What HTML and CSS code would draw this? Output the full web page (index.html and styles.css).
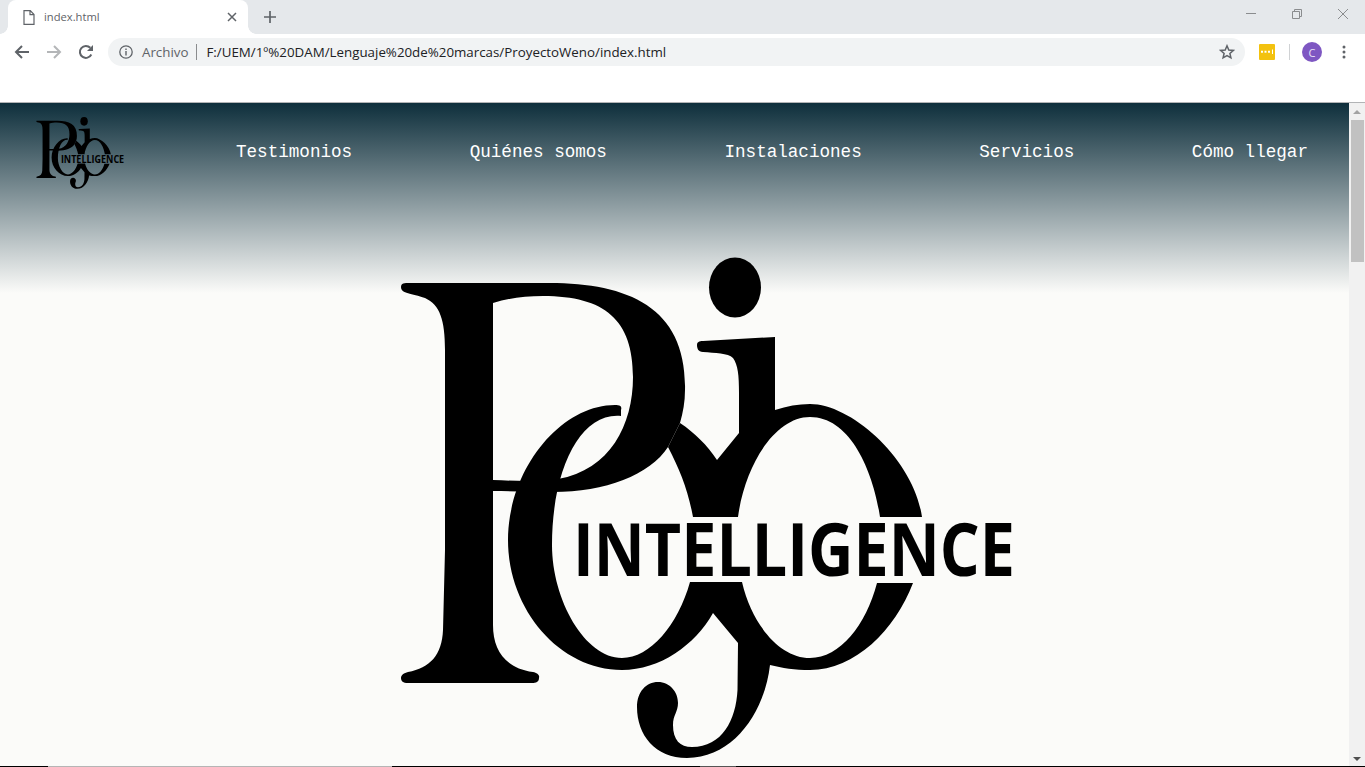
FILE: index.html
```html
<!DOCTYPE html>
<html lang="es">
<head>
<meta charset="utf-8">
<title>index.html</title>
<link rel="stylesheet" href="styles.css">
</head>
<body>
<svg class="defs" width="0" height="0" aria-hidden="true">
  <symbol id="logo" class="logo-symbol" viewBox="400 257 620 503">
    <ellipse cx="735" cy="287.500" rx="26" ry="30"/>
    <path fill-rule="evenodd" d="M401 287C401 283 404 283 410 283L540 283C625 281 687 305 685 390C685 402 683 412 680 423L668 447C650 475 605 492 553 492C530 492 510 491 493 491L493 625C493 650 505 668 533 672C537 673 540 675 539 678C539 682 536 683 532 683L408 683C403 683 401 681 401 678C401 675 404 673 408 672C430 668 442 655 443 630L445 550L445 350C445 320 440 305 425 298C412 293 401 294 401 287ZM493 303C510 298 525 296 543 296C605 296 633 320 633 377C633 425 610 470 558 479C540 482 515 481 493 480Z"/>
    <path d="M621 416C580 412 552 470 552 545C552 600 585 658 622 658C650 658 678 625 690 582L742 582C752 625 780 658 810 658C840 658 866 625 877 583L913 583C895 630 855 670 810 670C795 670 782 668 770 665C765 710 735 758 687 758C655 758 637 735 637 707C637 692 646 682 658 682C670 682 678 692 678 703C678 712 673 715 673 725C673 740 680 747 692 747C722 747 736 720 737.500 690L738 643L713 613C695 645 660 670 622 670C560 670 508 610 508 540C508 470 560 405 615 405C621 405 622 407 621 410Z"/>
    <path d="M680 423C695 433 707 445 717 460L739 433L739 393C739 375 738 365 733 358C728 353 715 353 703 352C698 352 697 348 697 345C697 342 699 341 703 341L775 337L775 410C787 406 798 404 810 404C852 404 914 460 922 517L880 517C873 470 850 417 810 417C775 417 745 465 738 517L693 517C688 490 680 470 668 447Z"/>
    <text class="logo-word" x="573" y="576" textLength="442" lengthAdjust="spacingAndGlyphs">INTELLIGENCE</text>
  </symbol>
</svg>

<div class="tabstrip">
  <div class="tab">
    <svg class="tab-file" width="12" height="15" viewBox="0 0 12 15"><path d="M1 .7h6.300L11 4.500v9.800H1zM7 .7v4h4" fill="none" stroke="#5f6368" stroke-width="1.200"/></svg>
    <span class="tab-title">index.html</span>
    <svg class="tab-close" width="10" height="10" viewBox="0 0 10 10"><path d="M1 1l8 8M9 1l-8 8" stroke="#5f6368" stroke-width="1.500"/></svg>
  </div>
  <svg class="new-tab" width="12" height="12" viewBox="0 0 12 12"><path d="M6 0v12M0 6h12" stroke="#5f6368" stroke-width="1.700"/></svg>
  <div class="window-controls">
    <svg width="10" height="10" viewBox="0 0 10 10"><path d="M0 4.500h10" stroke="#8a8c8e"/></svg>
    <svg width="10" height="10" viewBox="0 0 10 10"><path d="M.5 2.500h7v7h-7zM2.500 2.500V.5h7v7h-2" fill="none" stroke="#8a8c8e"/></svg>
    <svg width="10" height="10" viewBox="0 0 10 10"><path d="M0 0l10 10M10 0L0 10" stroke="#8a8c8e"/></svg>
  </div>
</div>

<div class="toolbar">
  <svg class="nav-icon" width="16" height="16" viewBox="0 0 16 16"><path d="M15 8H2M8 2L2 8l6 6" fill="none" stroke="#5f6368" stroke-width="2"/></svg>
  <svg class="nav-icon" width="16" height="16" viewBox="0 0 16 16"><path d="M1 8h13M8 2l6 6-6 6" fill="none" stroke="#b4b6b8" stroke-width="2"/></svg>
  <svg class="nav-icon" width="16" height="16" viewBox="0 0 16 16"><path d="M13.300 10.500A6 6 0 1 1 12.300 3.800" fill="none" stroke="#5f6368" stroke-width="2"/><path d="M15 1v6H9z" fill="#5f6368"/></svg>
  <div class="omnibox">
    <svg class="info" width="14" height="14" viewBox="0 0 14 14"><circle cx="7" cy="7" r="6.200" fill="none" stroke="#5f6368" stroke-width="1.300"/><path d="M6.300 6h1.400v4.500H6.300zM6.300 3.400h1.400v1.500H6.300z" fill="#5f6368"/></svg>
    <span class="scheme">Archivo</span>
    <span class="omni-sep"></span>
    <span class="url">F:/UEM/1º%20DAM/Lenguaje%20de%20marcas/ProyectoWeno/index.html</span>
    <svg class="star" width="16" height="16" viewBox="0 0 16 16"><path d="M8 1.800l1.800 4.200 4.500.4-3.400 3 1 4.400L8 11.500l-3.900 2.300 1-4.400-3.400-3 4.500-.4z" fill="none" stroke="#5f6368" stroke-width="1.500"/></svg>
  </div>
  <svg class="ext" width="16" height="16" viewBox="0 0 16 16"><rect width="16" height="16" rx="1" fill="#f3c20f"/><path d="M2 6.700h2v2H2zM5.500 6.700h2v2h-2zM9 6.700h2v2H9zM13 5.500h1v4.500h-1z" fill="#fff"/></svg>
  <span class="tool-sep"></span>
  <span class="avatar">C</span>
  <svg class="menu" width="4" height="14" viewBox="0 0 4 14"><circle cx="2" cy="2" r="1.500" fill="#5f6368"/><circle cx="2" cy="7" r="1.500" fill="#5f6368"/><circle cx="2" cy="12" r="1.500" fill="#5f6368"/></svg>
</div>
<div class="bookmarks"></div>

<div class="viewport">
  <main class="page">
    <header class="site-header">
      <svg class="logo-small" width="89" height="72"><use href="#logo"/></svg>
      <nav class="site-nav">
        <a href="#testimonios">Testimonios</a>
        <a href="#quienes">Quiénes somos</a>
        <a href="#instalaciones">Instalaciones</a>
        <a href="#servicios">Servicios</a>
        <a href="#llegar">Cómo llegar</a>
      </nav>
    </header>
    <section class="hero">
      <svg class="logo-large" width="620" height="503"><use href="#logo"/></svg>
    </section>
  </main>
  <div class="scrollbar">
    <span class="arrow-up"></span>
    <span class="thumb"></span>
    <span class="track"></span>
    <span class="arrow-down"></span>
  </div>
</div>
<div class="taskbar-edge"></div>
</body>
</html>
```
FILE: styles.css
```css
* { box-sizing: border-box; }
html, body { margin: 0; height: 100%; }
body {
  display: flex;
  flex-direction: column;
  height: 767px;
  overflow: hidden;
  background: #fff;
  font-family: "Open Sans", "Liberation Sans", sans-serif;
}
.defs { display: block; height: 0; }

.tabstrip {
  display: flex;
  align-items: center;
  height: 34px;
  flex: none;
  padding-left: 8px;
  background: #e5e8eb;
}
.tab {
  position: relative;
  display: flex;
  align-items: center;
  width: 240px;
  height: 34px;
  padding: 0 11px 0 15px;
  background: #fff;
  border-radius: 8px 8px 0 0;
}
.tab::before,
.tab::after {
  content: "";
  position: absolute;
  bottom: 0;
  width: 8px;
  height: 8px;
}
.tab::before { left: -8px; background: radial-gradient(circle at 0 0, #e5e8eb 7.500px, #fff 8px); }
.tab::after { right: -8px; background: radial-gradient(circle at 100% 0, #e5e8eb 7.500px, #fff 8px); }
.tab-file { flex: none; }
.tab-title { flex: 1; margin-left: 9px; margin-bottom: 1px; font-size: 11.200px; color: #5f6368; }
.tab-close { flex: none; }
.new-tab { margin-left: 16px; }
.window-controls {
  display: flex;
  gap: 36px;
  margin-left: auto;
  margin-right: 17px;
  margin-bottom: 6px;
}

.toolbar {
  display: flex;
  align-items: center;
  flex: none;
  height: 36px;
  padding-left: 14px;
  background: #fff;
}
.nav-icon { flex: none; margin-right: 16px; }
.omnibox {
  display: flex;
  align-items: center;
  width: 1137px;
  height: 28px;
  margin-left: -2px;
  padding: 0 10px;
  background: #f1f3f4;
  border-radius: 14px;
}
.info { flex: none; margin-left: 1px; }
.scheme { margin-left: 9px; font-size: 13.330px; color: #5f6368; }
.omni-sep { width: 1px; height: 16px; margin: 0 9px 0 8px; background: #8a8c8e; }
.url { flex: 1; font-size: 13.330px; color: #202124; white-space: nowrap; }
.star { flex: none; }
.ext { flex: none; margin-left: 14px; }
.tool-sep { width: 1px; height: 16px; margin-left: 14px; background: #d0d2d4; }
.avatar {
  display: flex;
  align-items: center;
  justify-content: center;
  flex: none;
  width: 20px;
  height: 20px;
  margin-left: 12px;
  border-radius: 50%;
  background: #7e57c2;
  color: #e9e2f5;
  font-size: 11px;
}
.menu { flex: none; margin-left: 20px; }
.bookmarks {
  flex: none;
  height: 33px;
  background: #fff;
  border-bottom: 1px solid #b2b4b6;
}

.viewport { display: flex; flex: 1; min-height: 0; }
.page {
  flex: 1;
  min-width: 0;
  overflow: hidden;
  background: #fbfbf9 linear-gradient(#0e2f3c, #fbfbf9) no-repeat;
  background-size: 100% 190px;
}
.site-header {
  display: flex;
  align-items: flex-start;
  height: 154px;
  padding: 14px 41px 0 36px;
}
.logo-small { flex: none; }
.site-nav {
  display: flex;
  justify-content: space-between;
  flex: 1;
  margin-left: 111px;
  padding-top: 25px;
}
.site-nav a {
  color: #fff;
  text-decoration: none;
  font: 17.600px/20px "Liberation Mono", "Courier New", monospace;
}
.hero { display: flex; padding-left: 400px; }
.logo-large { flex: none; }
.logo-small, .logo-large, .logo-symbol { overflow: visible; }
.logo-word {
  font-family: "Open Sans", "Noto Sans", sans-serif;
  font-weight: 700;
  font-size: 74px;
}

.scrollbar {
  display: flex;
  flex-direction: column;
  align-items: center;
  flex: none;
  width: 16px;
  background: #f1f1f1;
}
.arrow-up, .arrow-down {
  flex: none;
  width: 0;
  height: 0;
  border: 4px solid transparent;
}
.arrow-up { margin-top: 7px; margin-bottom: 6px; border-top: 0; border-bottom: 4px solid #a3a3a3; }
.arrow-down { margin-top: 4px; margin-bottom: 5px; border-bottom: 0; border-top: 4px solid #505050; }
.thumb { flex: none; width: 100%; height: 142px; border-left: 2px solid #f1f1f1; border-right: 1px solid #f1f1f1; background: #c1c1c1; }
.track { flex: 1; }

.taskbar-edge {
  flex: none;
  height: 1px;
  background: linear-gradient(90deg, #000 48px, #b5b5b5 48px, #b5b5b5 392px, #000 392px, #000 700px, #555 700px, #555 736px, #000 736px);
}
```
